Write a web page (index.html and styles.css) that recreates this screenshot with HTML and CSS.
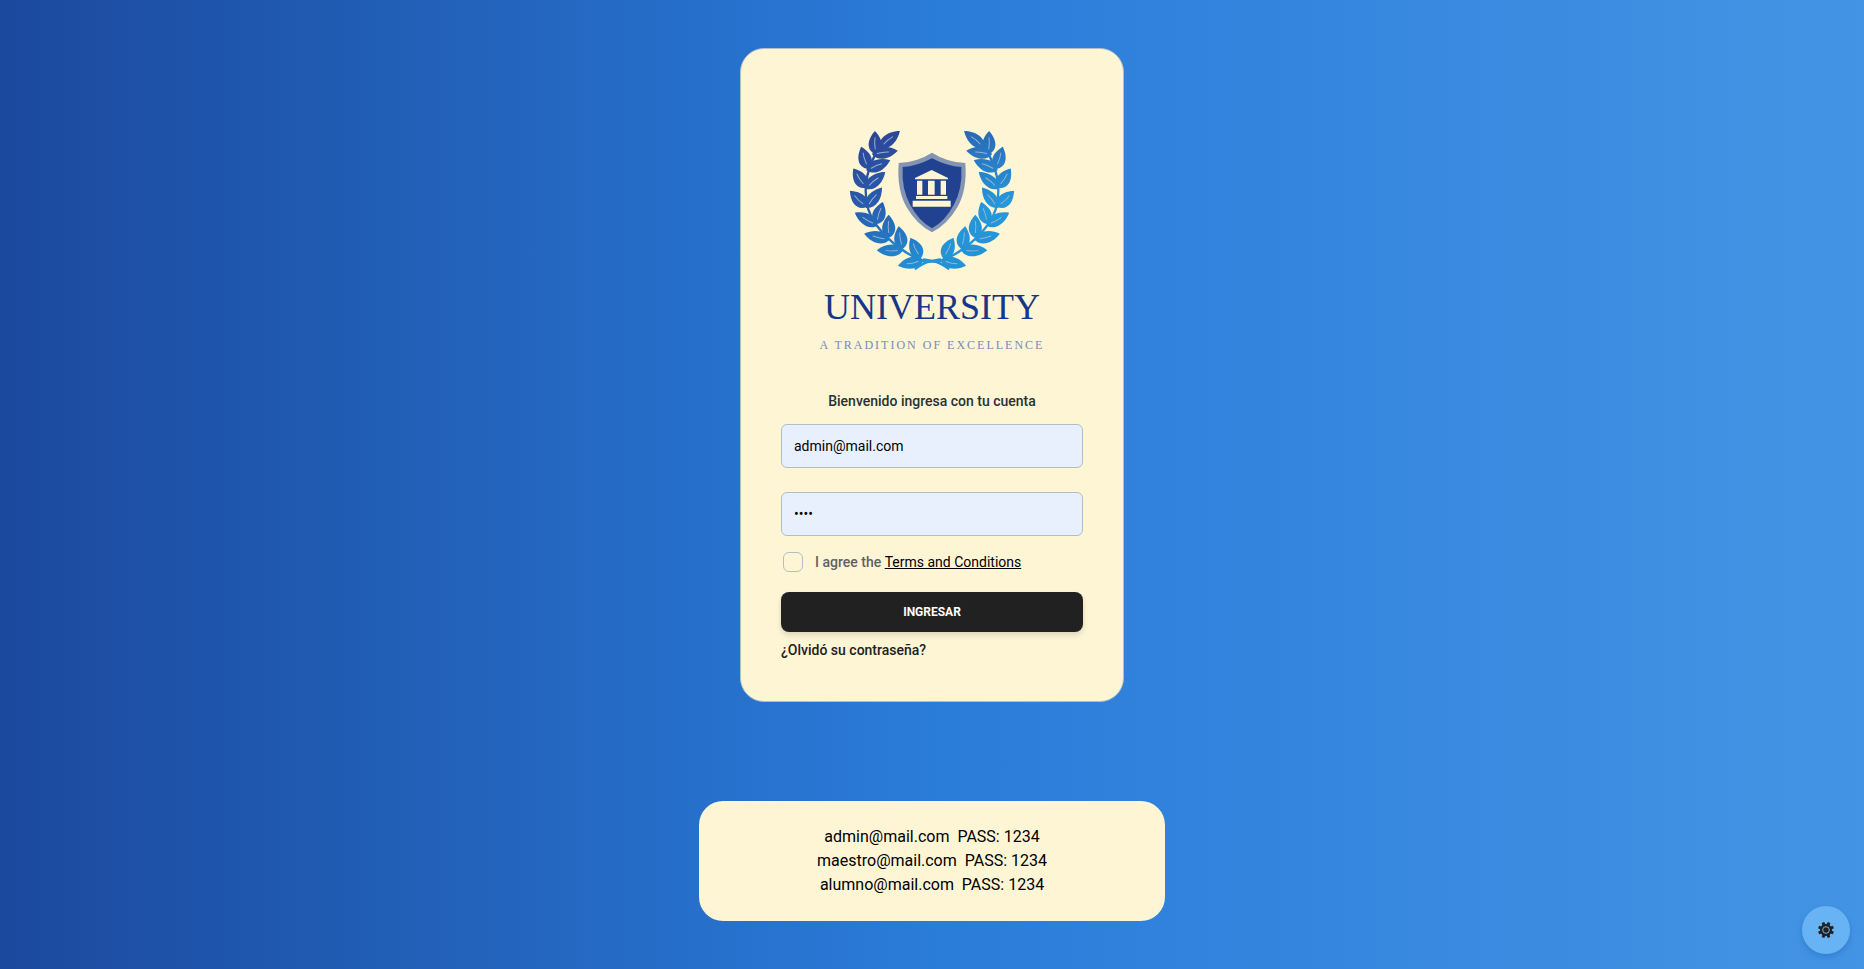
FILE: index.html
```html
<!DOCTYPE html>
<html lang="es">
<head>
<meta charset="utf-8">
<meta name="viewport" content="width=device-width, initial-scale=1">
<title>University</title>
<link rel="stylesheet" href="styles.css">
</head>
<body>
<main class="page">
  <section class="card">
    <div class="logo">
      <svg class="emblem" viewBox="0 0 906 462" aria-hidden="true">
        <defs>
          <linearGradient id="leafLeft" gradientUnits="userSpaceOnUse" x1="250" y1="60" x2="400" y2="450">
            <stop offset="0" stop-color="#2d4597"/><stop offset=".45" stop-color="#285cae"/><stop offset="1" stop-color="#2191d6"/>
          </linearGradient>
          <linearGradient id="leafRight" gradientUnits="userSpaceOnUse" x1="560" y1="40" x2="640" y2="420">
            <stop offset="0" stop-color="#2869b6"/><stop offset=".6" stop-color="#2797db"/><stop offset="1" stop-color="#2292d6"/>
          </linearGradient>
          <path id="leaf" d="M0 0C-30-16-22-46 0-70C22-46 30-16 0 0Z"/>
          <path id="slim" d="M0 0C-26-16-21-52 0-78C21-52 26-16 0 0Z"/>
          <path id="vein" d="M0-16Q-3-34 0-50"/>
          <g id="leaves">
            <use href="#slim" transform="translate(119 82) rotate(51)"/>
            <use href="#leaf" transform="translate(106 103) rotate(-1)"/>
            <use href="#slim" transform="translate(96 103) rotate(82)"/>
            <use href="#leaf" transform="translate(84 147) rotate(-17)"/>
            <use href="#slim" transform="translate(79 151) rotate(67)"/>
            <use href="#leaf" transform="translate(78 204) rotate(-33)"/>
            <use href="#slim" transform="translate(76 206) rotate(50)"/>
            <use href="#leaf" transform="translate(80 262) rotate(-46)"/>
            <use href="#slim" transform="translate(78 264) rotate(38)"/>
            <use href="#slim" transform="translate(112 317) rotate(-60)"/>
            <use href="#leaf" transform="translate(108 313) rotate(17)"/>
            <use href="#slim" transform="translate(148 360) rotate(-76)"/>
            <use href="#leaf" transform="translate(146 354) rotate(0)"/>
            <use href="#slim" transform="translate(188 392) rotate(-89)"/>
            <use href="#leaf" transform="translate(187 388) rotate(-9)"/>
            <use href="#slim" transform="translate(250 421) rotate(-102)"/>
            <use href="#leaf" transform="translate(242 416) rotate(-26)"/>
          </g>
          <g id="veins">
            <use href="#vein" transform="translate(119 82) rotate(51)"/>
            <use href="#vein" transform="translate(106 103) rotate(-1)"/>
            <use href="#vein" transform="translate(96 103) rotate(82)"/>
            <use href="#vein" transform="translate(84 147) rotate(-17)"/>
            <use href="#vein" transform="translate(79 151) rotate(67)"/>
            <use href="#vein" transform="translate(78 204) rotate(-33)"/>
            <use href="#vein" transform="translate(76 206) rotate(50)"/>
            <use href="#vein" transform="translate(80 262) rotate(-46)"/>
            <use href="#vein" transform="translate(78 264) rotate(38)"/>
            <use href="#vein" transform="translate(112 317) rotate(-60)"/>
            <use href="#vein" transform="translate(108 313) rotate(17)"/>
            <use href="#vein" transform="translate(148 360) rotate(-76)"/>
            <use href="#vein" transform="translate(146 354) rotate(0)"/>
            <use href="#vein" transform="translate(188 392) rotate(-89)"/>
            <use href="#vein" transform="translate(187 388) rotate(-9)"/>
            <use href="#vein" transform="translate(250 421) rotate(-102)"/>
            <use href="#vein" transform="translate(242 416) rotate(-26)"/>
          </g>
          <path id="stem" d="M122 78C70 150 60 250 109 315C150 370 205 405 242 420"/>
          <path id="tail" d="M236 416Q258 428 278 423Q303 428 325 446M276 423L300 418"/>
          <mask id="maskLeft" maskUnits="userSpaceOnUse" x="0" y="0" width="906" height="462">
            <g transform="translate(177 3)" fill="#fff"><use href="#leaves"/><g fill="none" stroke="#fff" stroke-width="7" stroke-linecap="round"><use href="#stem"/><use href="#tail"/></g></g>
          </mask>
          <mask id="maskRight" maskUnits="userSpaceOnUse" x="0" y="0" width="906" height="462">
            <g transform="translate(729 3) scale(-1 1)" fill="#fff"><use href="#leaves"/><g fill="none" stroke="#fff" stroke-width="7" stroke-linecap="round"><use href="#stem"/><use href="#tail"/></g></g>
          </mask>
        </defs>
        <rect width="906" height="462" fill="url(#leafLeft)" mask="url(#maskLeft)"/>
        <rect width="906" height="462" fill="url(#leafRight)" mask="url(#maskRight)"/>
        <g fill="none" stroke="#93b4cf" stroke-width="3" stroke-linecap="round">
          <use href="#veins" transform="translate(177 3)"/>
          <use href="#veins" transform="translate(729 3) scale(-1 1)"/>
        </g>
        <g transform="translate(177 3)">
          <path fill="#8494b3" d="M276 98Q322 127 376 129Q382 210 352 262Q322 314 276 337Q230 314 200 262Q170 210 176 129Q230 127 276 98Z"/>
          <path fill="#204291" d="M276 115Q322 139 364 141Q368 207 341 255Q316 303 276 325Q236 303 211 255Q184 207 188 141Q230 139 276 115Z"/>
          <g fill="#fef5d5">
            <path d="M275 150L324 174V178H225V174Z"/>
            <path d="M231 182h16v42h-16zM264 182h20v42h-20zM302 182h16v42h-16zM228 228h94v9h-94zM218 242h114v18H218z"/>
          </g>
        </g>
      </svg>
      <p class="brand">UNIVERSITY</p>
      <p class="tagline">A TRADITION OF EXCELLENCE</p>
    </div>
    <form class="form">
      <h1 class="welcome">Bienvenido ingresa con tu cuenta</h1>
      <input class="field" type="email" value="admin@mail.com" aria-label="Correo">
      <input class="field" type="password" value="1234" aria-label="Contraseña">
      <div class="terms">
        <input class="check" type="checkbox" id="agree">
        <label for="agree">I agree the <a href="#">Terms and Conditions</a></label>
      </div>
      <button class="submit" type="button">INGRESAR</button>
      <a class="forgot" href="#">¿Olvidó su contraseña?</a>
    </form>
  </section>
  <section class="accounts">
    <p>admin@mail.com &nbsp;PASS: 1234</p>
    <p>maestro@mail.com &nbsp;PASS: 1234</p>
    <p>alumno@mail.com &nbsp;PASS: 1234</p>
  </section>
</main>
<button class="theme" type="button" aria-label="Cambiar tema">
  <svg viewBox="0 0 48 48" aria-hidden="true">
    <g fill="#212121">
      <g id="teeth">
        <path id="tooth" d="M20 0h8l1 10H19zM20 48h8l1-10H19z" transform="rotate(22.5 24 24)"/>
        <use href="#tooth" transform="rotate(45 24 24)"/>
        <use href="#tooth" transform="rotate(90 24 24)"/>
        <use href="#tooth" transform="rotate(135 24 24)"/>
      </g>
      <circle cx="24" cy="24" r="18"/>
      <circle cx="24" cy="24" r="10" fill="none" stroke="#68b3f4" stroke-width="3"/>
    </g>
  </svg>
</button>
</body>
</html>
```
FILE: styles.css
```css
* {
  box-sizing: border-box;
}

body {
  margin: 0;
  font-family: Roboto, sans-serif;
  color: #000;
}

h1,
p {
  margin: 0;
}

.page {
  display: flex;
  flex-direction: column;
  align-items: center;
  gap: 99px;
  min-height: 100vh;
  padding: 48px 0;
  background: linear-gradient(to right, #1b499e 0%, #2a7cd9 50%, #4494e5 100%);
}

.card {
  width: 100%;
  max-width: 384px;
  padding: 40px;
  border: 1px solid #b0bec5;
  border-radius: 24px;
  background: #fef5d5;
}

.logo {
  display: flex;
  flex-direction: column;
  align-items: center;
  padding: 30px 0 36px;
  text-align: center;
  white-space: nowrap;
}

.emblem {
  display: block;
  width: 100%;
}

.brand {
  padding-top: 10px;
  font-family: "Liberation Serif", serif;
  font-size: 36px;
  line-height: 48px;
  color: #15378a;
}

.tagline {
  padding-top: 4px;
  font-family: "Liberation Serif", serif;
  font-size: 12px;
  line-height: 20px;
  letter-spacing: 2px;
  color: #738bb9;
}

.form {
  display: flex;
  flex-direction: column;
}

.welcome {
  font-size: 14px;
  font-weight: 500;
  line-height: 20px;
  text-align: center;
  color: #263238;
}

.field {
  width: 100%;
  height: 44px;
  margin: 13px 0 11px;
  padding: 12px;
  border: 1px solid #b0bec5;
  border-radius: 6px;
  background: #e8f0fe;
  font: 14px/20px Roboto, sans-serif;
  color: #000;
}

.terms {
  display: flex;
  align-items: center;
  gap: 12px;
  padding: 5px 2px 20px;
  font-size: 14px;
  font-weight: 500;
  line-height: 20px;
  color: #616161;
}

.terms a {
  font-weight: 400;
  color: #000;
}

.check {
  appearance: none;
  width: 20px;
  height: 20px;
  margin: 0;
  border: 1px solid #b0bec5;
  border-radius: 6px;
}

.submit {
  height: 40px;
  border: 0;
  border-radius: 8px;
  background: #212121;
  box-shadow: 0 4px 6px rgba(33, 33, 33, 0.08), 0 2px 4px rgba(33, 33, 33, 0.08);
  font: 700 12px/16px Roboto, sans-serif;
  color: #fff;
}

.forgot {
  padding: 8px 0 1px;
  font-size: 14px;
  font-weight: 500;
  line-height: 20px;
  text-decoration: none;
  color: #212121;
}

.accounts {
  width: 25%;
  min-width: 320px;
  padding: 24px;
  border-radius: 24px;
  background: #fef5d5;
  font-size: 16px;
  line-height: 24px;
  text-align: center;
}

.theme {
  position: fixed;
  right: 14px;
  bottom: 15px;
  display: grid;
  place-items: center;
  width: 48px;
  height: 48px;
  padding: 0;
  border: 0;
  border-radius: 50%;
  background: #68b3f4;
  box-shadow: 0 4px 6px rgba(33, 110, 190, 0.3), 0 2px 4px rgba(33, 110, 190, 0.2);
}

.theme svg {
  width: 16px;
  height: 16px;
}
```
